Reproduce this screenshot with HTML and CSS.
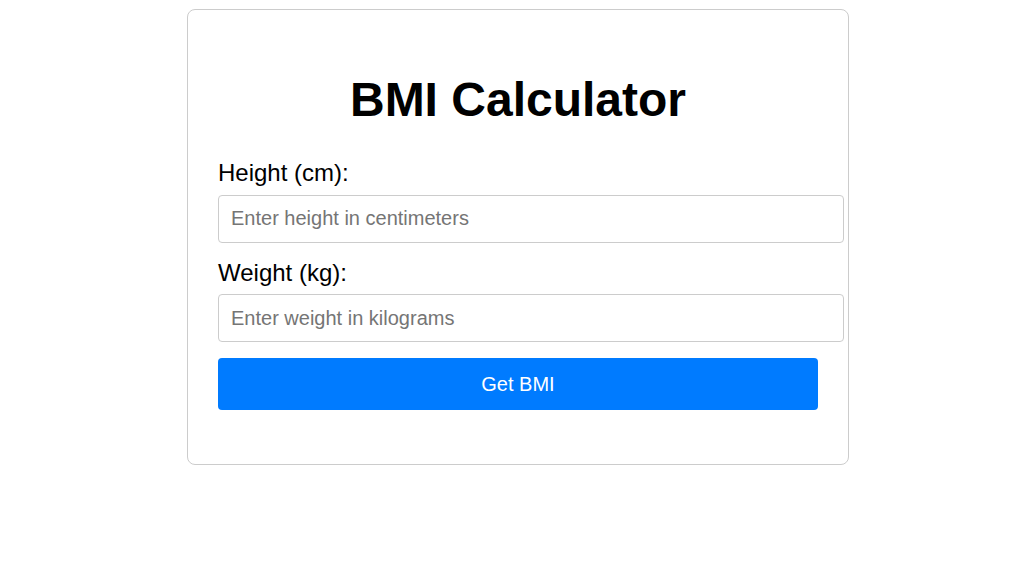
FILE: index.html
```html
<!DOCTYPE html>
<html lang="en">
<head>
<meta charset="utf-8">
<title>BMI Calculator</title>
<link rel="stylesheet" href="styles.css">
</head>
<body>
<main class="page">
  <section class="card">
    <h1 class="title">BMI Calculator</h1>
    <form class="form">
      <label class="label" for="height">Height (cm):</label>
      <input class="field" id="height" type="number" placeholder="Enter height in centimeters">
      <label class="label" for="weight">Weight (kg):</label>
      <input class="field" id="weight" type="number" placeholder="Enter weight in kilograms">
      <button class="btn" type="button">Get BMI</button>
    </form>
  </section>
</main>
</body>
</html>
```

FILE: styles.css
```css
html, body {
  margin: 0;
  padding: 0;
  background: #fff;
}

body {
  font-family: "Liberation Sans", Arial, sans-serif;
  color: #000;
}

.page {
  padding: 9px 0 0 187px;
}

.card {
  width: 600px;
  padding: 30px 30px 54px;
  border: 1px solid #cccccc;
  border-radius: 8px;
}

.title {
  font-size: 48px;
  font-weight: bold;
  text-align: center;
  margin: 32px 0;
  line-height: normal;
}

.form {
  display: flex;
  flex-direction: column;
  align-items: flex-start;
}

.label {
  display: block;
  font-size: 24px;
  line-height: 27.6px;
  margin-bottom: 8px;
}

.field {
  box-sizing: border-box;
  width: 626px;
  height: 48px;
  padding: 0 12px;
  border: 1px solid #cccccc;
  border-radius: 4px;
  font-family: "Liberation Sans", Arial, sans-serif;
  font-size: 20px;
  color: #000;
  margin: 0 0 16px;
  outline: none;
  -moz-appearance: textfield;
}

.field::placeholder {
  color: #757575;
}

.field::-webkit-outer-spin-button,
.field::-webkit-inner-spin-button {
  -webkit-appearance: none;
  margin: 0;
}

.btn {
  width: 600px;
  height: 52px;
  border: none;
  border-radius: 4px;
  background: #007bff;
  color: #fff;
  font-family: "Liberation Sans", Arial, sans-serif;
  font-size: 20px;
  cursor: pointer;
}
```
